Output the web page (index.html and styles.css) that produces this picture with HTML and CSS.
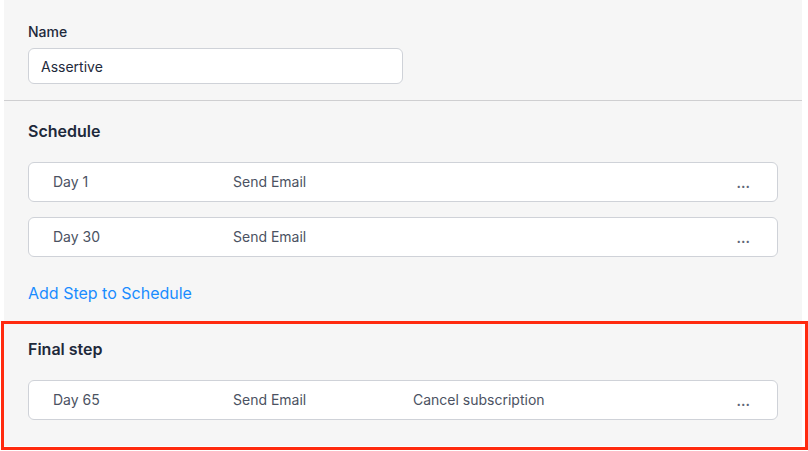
FILE: index.html
```html
<!DOCTYPE html>
<html lang="en">

<head>
  <meta charset="UTF-8">
  <meta name="viewport" content="width=device-width, initial-scale=1.0">
  <title>Dunning schedule - Assertive</title>
  <link rel="stylesheet" href="styles.css">
</head>

<body>
  <div class="panel">
    <div class="name-block">
      <label class="label" for="schedule-name">Name</label>
      <input class="input" id="schedule-name" type="text" value="Assertive">
    </div>

    <div class="section">
      <h3 class="section-title">Schedule</h3>
      <div class="steps">
        <div class="step">
          <span class="step-day">Day 1</span>
          <span class="step-action">Send Email</span>
          <span class="step-extra"></span>
          <button class="step-menu">...</button>
        </div>
        <div class="step">
          <span class="step-day">Day 30</span>
          <span class="step-action">Send Email</span>
          <span class="step-extra"></span>
          <button class="step-menu">...</button>
        </div>
      </div>
      <a class="add-link" href="#">Add Step to Schedule</a>
    </div>

    <div class="section final">
      <h3 class="section-title">Final step</h3>
      <div class="steps">
        <div class="step">
          <span class="step-day">Day 65</span>
          <span class="step-action">Send Email</span>
          <span class="step-extra">Cancel subscription</span>
          <button class="step-menu">...</button>
        </div>
      </div>
    </div>
  </div>
</body>

</html>
```

FILE: styles.css
```css
body {
  margin: 0;
  padding-bottom: 5px;
  background: #fff;
  font-family: Inter, 'Noto Sans', sans-serif;
  color: #1e293b;
}

.panel {
  margin: 0 6px 0 4px;
  background: #f6f6f6;
  height: 446px;
}

.name-block {
  padding: 24px 24px 16px;
  border-bottom: 1px solid #cfcfd1;
}

.label {
  display: block;
  font-size: 14px;
  line-height: 16px;
  font-weight: 500;
  color: #1e293b;
  margin-bottom: 8px;
}

.input {
  box-sizing: border-box;
  display: block;
  width: 375px;
  height: 36px;
  padding: 0 12px;
  border: 1px solid #cfd2d8;
  border-radius: 6px;
  background: #fff;
  font-family: inherit;
  font-size: 14px;
  color: #1e293b;
}

.section {
  padding: 20px 24px 0;
}

.section-title {
  margin: 0 0 21px;
  font-size: 16px;
  line-height: 20px;
  font-weight: 600;
  color: #1e293b;
}

.steps {
  display: flex;
  flex-direction: column;
  gap: 15px;
}

.step {
  box-sizing: border-box;
  display: grid;
  grid-template-columns: 180px 180px 1fr auto;
  align-items: center;
  height: 40px;
  padding: 0 27px 0 24px;
  background: #fff;
  border: 1px solid #cfd2d8;
  border-radius: 6px;
  font-size: 14px;
  line-height: 18px;
  color: #4b5262;
}

.step-menu {
  border: 0;
  background: none;
  padding: 0;
  font-family: inherit;
  font-size: 14px;
  font-weight: 600;
  color: #5d6575;
  cursor: pointer;
}

.add-link {
  display: block;
  width: fit-content;
  margin-top: 26px;
  font-size: 16px;
  line-height: 20px;
  color: #1a8cff;
  text-decoration: none;
}

.section.final {
  position: relative;
  margin-top: 18px;
  padding-top: 18px;
}

/* highlight box around the final step */
.section.final::after {
  content: '';
  position: absolute;
  top: 0;
  left: -3px;
  right: -6px;
  height: 129px;
  border: 3px solid #ff2a0f;
  box-sizing: border-box;
  pointer-events: none;
}
```
